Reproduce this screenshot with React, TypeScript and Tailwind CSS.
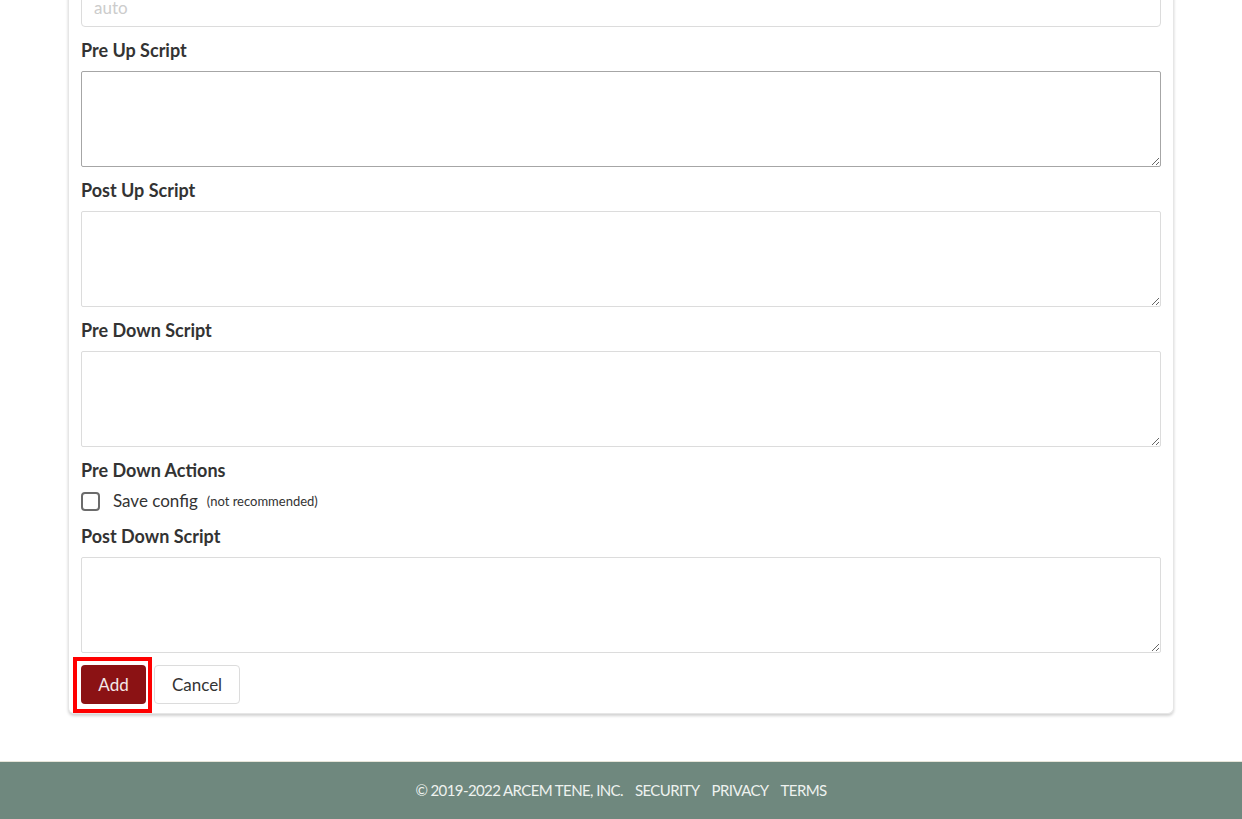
import React from 'react';

const font = { fontFamily: 'Lato, "Open Sans", sans-serif' };

const Label: React.FC<{ children: React.ReactNode; className?: string }> = ({ children, className }) => (
  <div className={`text-[18px] leading-[24px] font-bold text-[#333333] ${className ?? 'mb-[9px]'}`}>{children}</div>
);

const Script: React.FC<{ label: string; dark?: boolean }> = ({ label, dark }) => (
  <div>
    <Label>{label}</Label>
    <textarea
      className={`block w-full h-[96px] bg-white border rounded-[2px] outline-none ${
        dark ? 'border-[#a6a6a6]' : 'border-[#dcdcdc]'
      }`}
    />
  </div>
);

export default function App() {
  return (
    <div className="min-h-[819px] bg-white flex flex-col overflow-hidden" style={font}>
      <div className="mx-[68px] -mt-[13px] bg-white border border-t-0 border-[#e6e6e6] rounded-b-[6px] shadow-[0_2px_3px_rgba(0,0,0,0.18)] px-[12px] pb-[9px] flex flex-col gap-[11px]">
        <input
          placeholder="auto"
          className="block w-full h-[40px] px-[12px] pt-[1px] border border-[#dcdcdc] rounded-[4px] text-[17px] text-[#333] placeholder:text-[#cccccc] outline-none"
        />
        <Script label="Pre Up Script" dark />
        <Script label="Post Up Script" />
        <Script label="Pre Down Script" />
        <div>
          <Label className="mb-[7px]">Pre Down Actions</Label>
          <div className="flex items-center h-[24px]">
            <span className="w-[19px] h-[19px] border-2 border-[#6b6b6b] rounded-[4px] bg-white" />
            <span className="ml-[13px] text-[17px] text-[#333333]">Save config</span>
            <span className="ml-[9px] text-[13px] text-[#333333] pt-[2px]">(not recommended)</span>
          </div>
        </div>
        <Script label="Post Down Script" />
        <div className="flex items-center gap-[8px] mt-[1px]">
          <div className="relative">
            <button className="block h-[39px] w-[65px] rounded-[4px] bg-[#8b1214] text-[#f3e8e8] text-[17px]">Add</button>
            <span className="absolute -left-[8px] -top-[8px] -right-[6px] -bottom-[9px] border-4 border-[#ff0000] pointer-events-none" />
          </div>
          <button className="block h-[39px] w-[86px] rounded-[4px] bg-white border border-[#dcdcdc] text-[#333333] text-[17px]">Cancel</button>
        </div>
      </div>
      <div className="mt-[47px] border-t border-[#e6e4d8] bg-[#6f887e] h-[58px] flex items-center justify-center gap-[12px] text-[15px] text-[#eef2ef] uppercase tracking-[-0.6px]">
        <span>© 2019-2022 Arcem Tene, Inc.</span>
        <span>Security</span>
        <span>Privacy</span>
        <span>Terms</span>
      </div>
    </div>
  );
}
